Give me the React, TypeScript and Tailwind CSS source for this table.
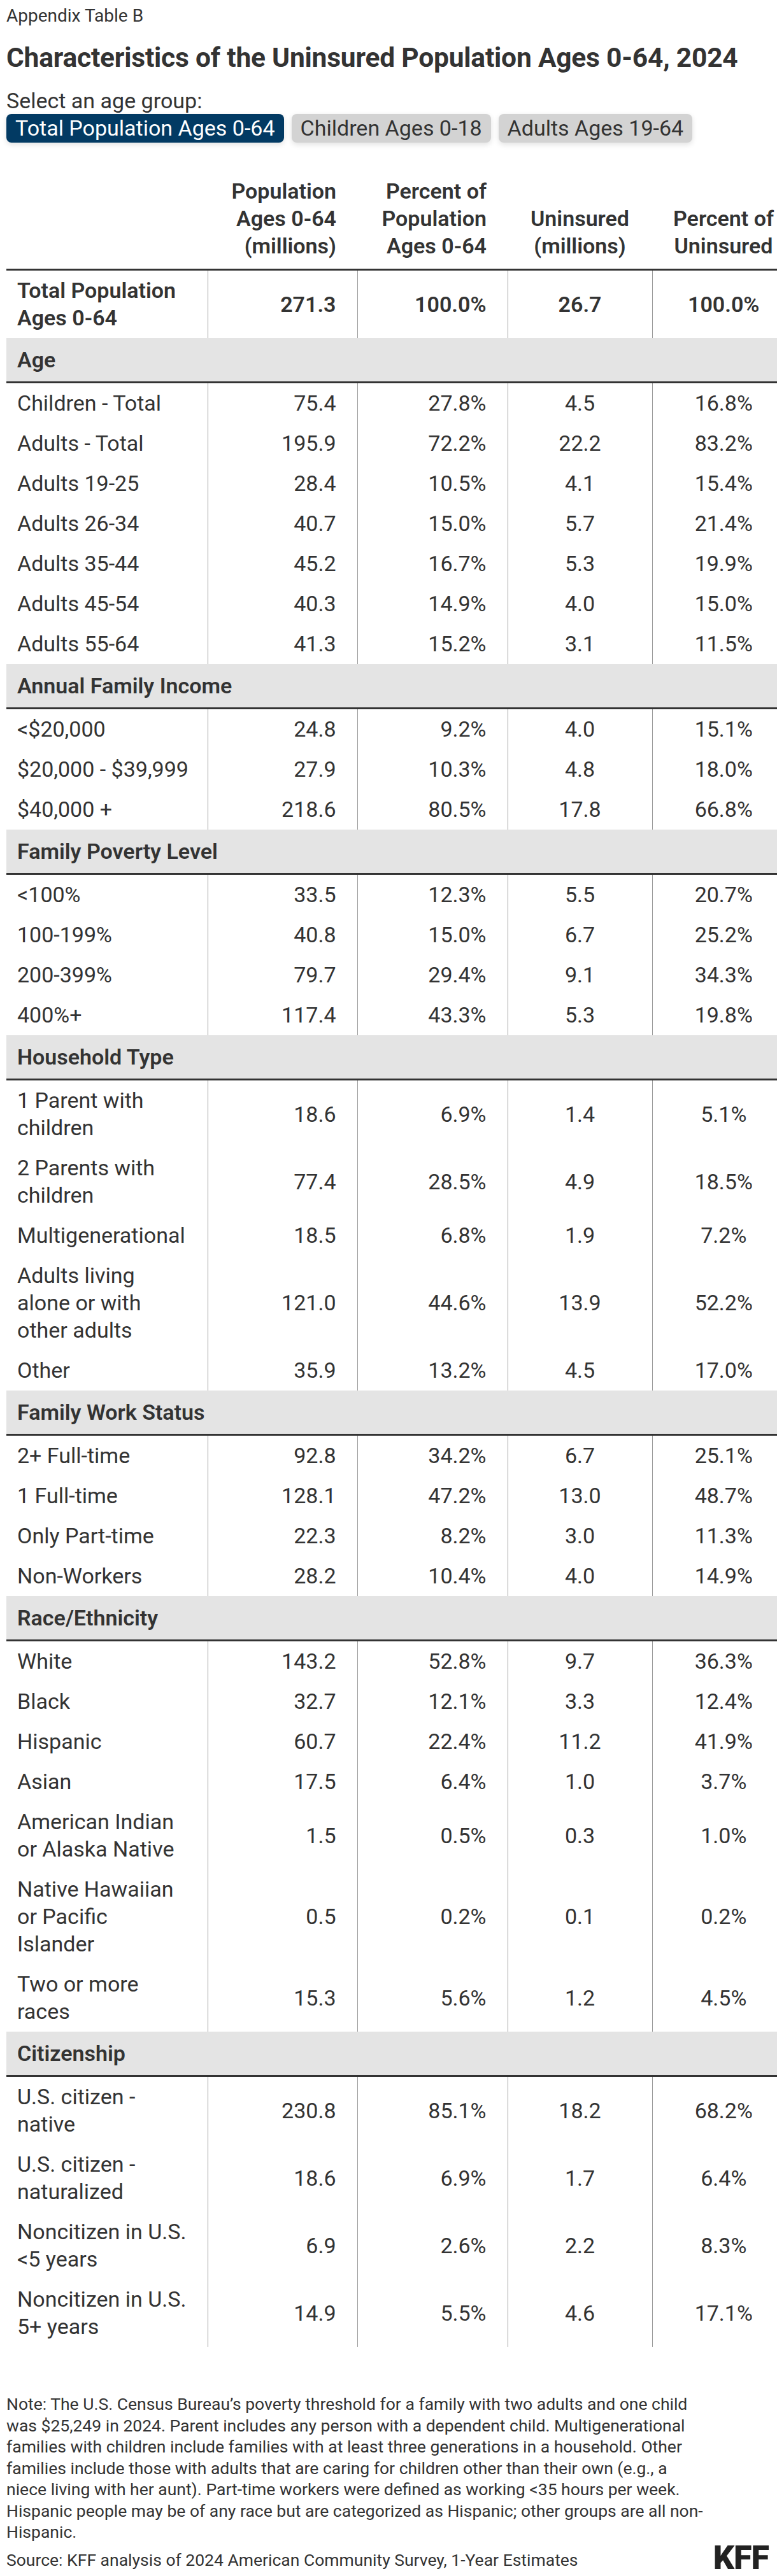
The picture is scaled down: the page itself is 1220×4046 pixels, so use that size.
import React from 'react';

type Row = [string | string[], string, string, string, string];

const sections: { title: string; rows: Row[] }[] = [
  {
    title: 'Age',
    rows: [
      ['Children - Total', '75.4', '27.8%', '4.5', '16.8%'],
      ['Adults - Total', '195.9', '72.2%', '22.2', '83.2%'],
      ['Adults 19-25', '28.4', '10.5%', '4.1', '15.4%'],
      ['Adults 26-34', '40.7', '15.0%', '5.7', '21.4%'],
      ['Adults 35-44', '45.2', '16.7%', '5.3', '19.9%'],
      ['Adults 45-54', '40.3', '14.9%', '4.0', '15.0%'],
      ['Adults 55-64', '41.3', '15.2%', '3.1', '11.5%'],
    ],
  },
  {
    title: 'Annual Family Income',
    rows: [
      ['<$20,000', '24.8', '9.2%', '4.0', '15.1%'],
      ['$20,000 - $39,999', '27.9', '10.3%', '4.8', '18.0%'],
      ['$40,000 +', '218.6', '80.5%', '17.8', '66.8%'],
    ],
  },
  {
    title: 'Family Poverty Level',
    rows: [
      ['<100%', '33.5', '12.3%', '5.5', '20.7%'],
      ['100-199%', '40.8', '15.0%', '6.7', '25.2%'],
      ['200-399%', '79.7', '29.4%', '9.1', '34.3%'],
      ['400%+', '117.4', '43.3%', '5.3', '19.8%'],
    ],
  },
  {
    title: 'Household Type',
    rows: [
      [['1 Parent with', 'children'], '18.6', '6.9%', '1.4', '5.1%'],
      [['2 Parents with', 'children'], '77.4', '28.5%', '4.9', '18.5%'],
      ['Multigenerational', '18.5', '6.8%', '1.9', '7.2%'],
      [['Adults living', 'alone or with', 'other adults'], '121.0', '44.6%', '13.9', '52.2%'],
      ['Other', '35.9', '13.2%', '4.5', '17.0%'],
    ],
  },
  {
    title: 'Family Work Status',
    rows: [
      ['2+ Full-time', '92.8', '34.2%', '6.7', '25.1%'],
      ['1 Full-time', '128.1', '47.2%', '13.0', '48.7%'],
      ['Only Part-time', '22.3', '8.2%', '3.0', '11.3%'],
      ['Non-Workers', '28.2', '10.4%', '4.0', '14.9%'],
    ],
  },
  {
    title: 'Race/Ethnicity',
    rows: [
      ['White', '143.2', '52.8%', '9.7', '36.3%'],
      ['Black', '32.7', '12.1%', '3.3', '12.4%'],
      ['Hispanic', '60.7', '22.4%', '11.2', '41.9%'],
      ['Asian', '17.5', '6.4%', '1.0', '3.7%'],
      [['American Indian', 'or Alaska Native'], '1.5', '0.5%', '0.3', '1.0%'],
      [['Native Hawaiian', 'or Pacific', 'Islander'], '0.5', '0.2%', '0.1', '0.2%'],
      [['Two or more', 'races'], '15.3', '5.6%', '1.2', '4.5%'],
    ],
  },
  {
    title: 'Citizenship',
    rows: [
      [['U.S. citizen -', 'native'], '230.8', '85.1%', '18.2', '68.2%'],
      [['U.S. citizen -', 'naturalized'], '18.6', '6.9%', '1.7', '6.4%'],
      [['Noncitizen in U.S.', '<5 years'], '6.9', '2.6%', '2.2', '8.3%'],
      [['Noncitizen in U.S.', '5+ years'], '14.9', '5.5%', '4.6', '17.1%'],
    ],
  },
];

const noteLines = [
  'Note: The U.S. Census Bureau’s poverty threshold for a family with two adults and one child',
  'was $25,249 in 2024. Parent includes any person with a dependent child. Multigenerational',
  'families with children include families with at least three generations in a household. Other',
  'families include those with adults that are caring for children other than their own (e.g., a',
  'niece living with her aunt). Part-time workers were defined as working <35 hours per week.',
  'Hispanic people may be of any race but are categorized as Hispanic; other groups are all non-',
  'Hispanic.',
];

function Lines({ text }: { text: string | string[] }) {
  const parts = Array.isArray(text) ? text : [text];
  return (
    <>
      {parts.map((p, i) => (
        <div key={i}>{p}</div>
      ))}
    </>
  );
}

const cell = 'py-[10px] leading-[43px] align-middle whitespace-nowrap';

function DataRow({ row, bold }: { row: Row; bold?: boolean }) {
  const [label, a, b, c, d] = row;
  const w = bold ? 'font-semibold' : 'font-normal';
  return (
    <tr className={w}>
      <td className={`${cell} pl-[17px] pr-2 text-left`}>
        <Lines text={label} />
      </td>
      <td className={`${cell} border-l border-[#9a9a9a] pr-[33px] text-right`}>{a}</td>
      <td className={`${cell} border-l border-[#9a9a9a] pr-[33px] text-right`}>{b}</td>
      <td className={`${cell} border-l border-[#9a9a9a] text-center`}>{c}</td>
      <td className={`${cell} border-l border-[#9a9a9a] pl-[28px] text-center`}>{d}</td>
    </tr>
  );
}

export default function App() {
  return (
    <div className="min-h-screen w-full bg-white text-[#333] font-['Roboto',sans-serif]">
      <div className="px-[10px] pt-[8px]">
        <div className="text-[28px] leading-[34px]">Appendix Table B</div>
        <h1 className="mt-[23px] text-[42.5px] leading-[52px] font-bold tracking-[-0.2px]">
          Characteristics of the Uninsured Population Ages 0-64, 2024
        </h1>
        <div className="mt-[20px] text-[34px] leading-[42px]">Select an age group:</div>
        <div className="flex gap-[12px]">
          <button className="h-[45px] rounded-lg bg-[#023a63] px-[14px] text-[34px] leading-[45px] text-white shadow-[0_3px_8px_rgba(0,0,0,0.12)]">
            Total Population Ages 0-64
          </button>
          <button className="h-[45px] rounded-lg bg-[#d3d3d3] px-[14px] text-[34px] leading-[45px] text-[#333] shadow-[0_3px_8px_rgba(0,0,0,0.12)]">
            Children Ages 0-18
          </button>
          <button className="h-[45px] rounded-lg bg-[#d3d3d3] px-[14px] text-[34px] leading-[45px] text-[#333] shadow-[0_3px_8px_rgba(0,0,0,0.12)]">
            Adults Ages 19-64
          </button>
        </div>

        <table className="mt-[35px] w-[1210px] table-fixed border-collapse text-[34px]">
          <colgroup>
            <col className="w-[316px]" />
            <col className="w-[235px]" />
            <col className="w-[236px]" />
            <col className="w-[227px]" />
            <col className="w-[196px]" />
          </colgroup>
          <thead>
            <tr className="border-b-[3px] border-[#333] font-semibold">
              <th className="pt-[20px] pb-[14px] align-bottom" />
              <th className="pt-[20px] pb-[14px] pr-[33px] text-right align-bottom leading-[43px] font-semibold whitespace-nowrap">
                <Lines text={['Population', 'Ages 0-64', '(millions)']} />
              </th>
              <th className="pt-[20px] pb-[14px] pr-[33px] text-right align-bottom leading-[43px] font-semibold whitespace-nowrap">
                <Lines text={['Percent of', 'Population', 'Ages 0-64']} />
              </th>
              <th className="pt-[20px] pb-[14px] text-center align-bottom leading-[43px] font-semibold whitespace-nowrap">
                <Lines text={['Uninsured', '(millions)']} />
              </th>
              <th className="pt-[20px] pb-[14px] pl-[28px] text-center align-bottom leading-[43px] font-semibold whitespace-nowrap">
                <Lines text={['Percent of', 'Uninsured']} />
              </th>
            </tr>
          </thead>
          <tbody>
            <DataRow bold row={[['Total Population', 'Ages 0-64'], '271.3', '100.0%', '26.7', '100.0%']} />
            {sections.map((s) => (
              <React.Fragment key={s.title}>
                <tr className="border-b-[3px] border-[#333] bg-[#e4e4e4]">
                  <td colSpan={5} className="py-[13px] pl-[17px] leading-[42px] font-semibold">
                    {s.title}
                  </td>
                </tr>
                {s.rows.map((r, i) => (
                  <DataRow key={i} row={r} />
                ))}
              </React.Fragment>
            ))}
          </tbody>
        </table>

        <div className="mt-[73px] text-[26.5px] leading-[33.5px]">
          {noteLines.map((l, i) => (
            <div key={i} className="whitespace-nowrap">
              {l}
            </div>
          ))}
        </div>
        <div className="mt-[5px] flex items-end justify-between pr-[3px]">
          <div className="text-[26.5px] leading-[33.5px]">
            Source: KFF analysis of 2024 American Community Survey, 1-Year Estimates
          </div>
          <div className="mb-[2px] text-[52px] leading-[37px] font-black tracking-[-1px] text-[#222]">KFF</div>
        </div>
      </div>
    </div>
  );
}
